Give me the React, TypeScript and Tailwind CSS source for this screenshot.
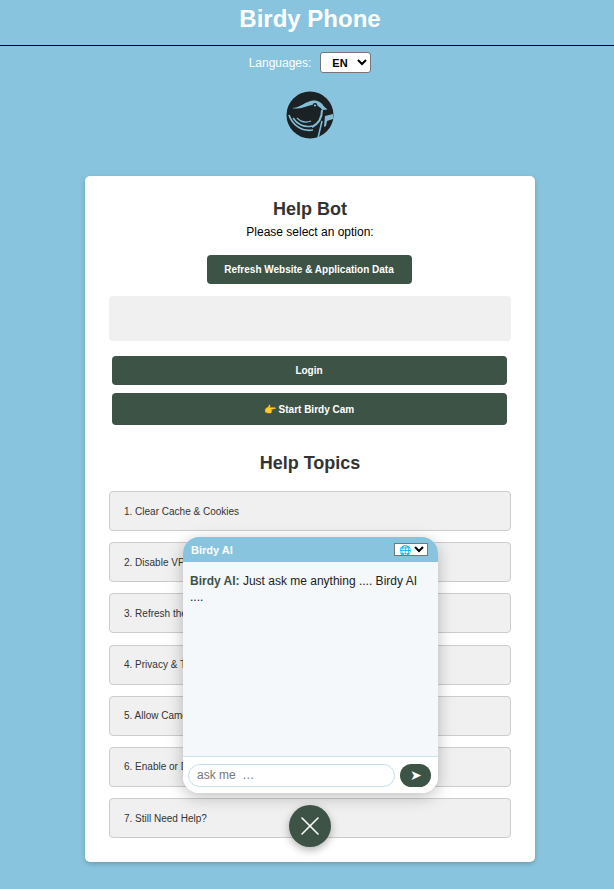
import { useState } from "react";
import { X } from "lucide-react";

const TOPICS = [
  "1. Clear Cache & Cookies",
  "2. Disable VPN or Proxy",
  "3. Refresh the Application",
  "4. Privacy & Tracking Settings",
  "5. Allow Camera & Microphone",
  "6. Enable or Disable Notifications",
  "7. Still Need Help?",
];

function BirdLogo() {
  return (
    <svg viewBox="0 0 48 48" className="h-12 w-12">
      <circle cx="24" cy="24" r="23.5" fill="#1a2225" />
      {/* head band */}
      <path
        d="M6 17C14 17 20 10 27 9.500c5 0 9 2 10.500 5.500l4 3.500-5 .5C33 15 30 13 26 14 19 15.500 13 19 6 17z"
        fill="#85bdd6"
      />
      <circle cx="29" cy="14.500" r="2.400" fill="#1a2225" />
      <circle cx="29" cy="14.500" r="1.100" fill="#8fc0d6" />
      {/* breast and wing arcs */}
      <path d="M36 19c0 8-4 14-10 17" stroke="#85bdd6" strokeWidth="2" fill="none" />
      <path d="M3 24c3 9 12 17 24 15" stroke="#85bdd6" strokeWidth="1.700" fill="none" />
      <path d="M7 27c4 6 11 10 19 8" stroke="#85bdd6" strokeWidth="1.500" fill="none" />
      <path d="M11 27c4 4 9 5 14 3" stroke="#85bdd6" strokeWidth="1.300" fill="none" />
      {/* tail */}
      <path d="M39 25l8-2v5l-6 2-1 5-2 1z" fill="#85bdd6" />
      <path d="M36 30l-4 17" stroke="#85bdd6" strokeWidth="1.500" />
    </svg>
  );
}

export default function App() {
  const [message, setMessage] = useState("");

  return (
    <div className="h-[889px] w-full overflow-hidden bg-[#89c4de]">
      <div
        className="relative h-[889px] w-[620px] text-[#333]"
        style={{ fontFamily: '"Liberation Sans", Arial, sans-serif' }}
      >
        <header className="flex h-[46px] items-start justify-center border-b border-black pt-[4px]">
          <h1 className="text-[24px] leading-[30px] font-bold text-white">Birdy Phone</h1>
        </header>

        <div className="mt-[6px] flex h-[21px] items-center justify-center gap-[9px] text-[12px] text-white">
          <span>Languages:</span>
          <select className="h-[21px] w-[51px] rounded-[3px] border border-[#767676] bg-white pl-[7px] text-[11px] font-bold text-black">
            <option>EN</option>
          </select>
        </div>

        <div className="mt-[18px] flex justify-center">
          <BirdLogo />
        </div>

        <main className="mx-auto mt-[37px] flex h-[686px] w-[450px] flex-col items-center rounded-[5px] bg-white px-6 pt-[22px] shadow-[0_2px_5px_rgba(0,0,0,0.2)]">
          <h2 className="text-[18px] leading-[22px] font-bold">Help Bot</h2>
          <p className="mt-[5px] text-[12px] leading-[14px] text-black">Please select an option:</p>
          <button className="mt-[16px] mr-[2px] h-[29px] w-[205px] rounded-[4px] bg-[#3d5346] text-[10px] font-bold text-white">
            Refresh Website &amp; Application Data
          </button>
          <div className="mt-[12px] h-[45px] w-full rounded-[4px] bg-[#f0f0f0]" />
          <button className="mt-[15px] mr-[2px] h-[29px] w-[395px] rounded-[4px] bg-[#3d5346] text-[10px] font-bold text-white">
            Login
          </button>
          <button className="mt-[8px] mr-[2px] h-[32px] w-[395px] rounded-[4px] bg-[#3d5346] text-[10px] font-bold text-white">
            👉 Start Birdy Cam
          </button>

          <h2 className="mt-[27px] text-[18px] leading-[22px] font-bold">Help Topics</h2>
          <ul className="mt-[17px] flex w-full flex-col gap-[11.2px]">
            {TOPICS.map((topic) => (
              <li
                key={topic}
                className="flex h-[40px] items-center rounded-[4px] border border-[#ccc] bg-[#f0f0f0] pl-[14px] text-[10px] text-[#333]"
              >
                {topic}
              </li>
            ))}
          </ul>
        </main>

        <section className="absolute top-[537px] left-[183px] flex h-[256px] w-[255px] flex-col overflow-hidden rounded-[16px] bg-white shadow-[0_4px_16px_rgba(0,0,0,0.25)]">
          <div className="flex h-[25px] shrink-0 items-center justify-between bg-[#89c4de] pr-[10px] pl-[8px]">
            <span className="pt-[1px] text-[11px] font-bold text-white">Birdy AI</span>
            <select className="h-[13px] w-[34px] border border-[#767676] bg-white text-[10px] text-black">
              <option>🌐</option>
            </select>
          </div>
          <div className="flex-1 border-b border-[#c9e3ee] bg-[#f4f8fb] px-[7px] pt-[11px] text-[12px] leading-[16px] text-[#222]">
            <strong className="text-[#3d5346]">Birdy AI:</strong> Just ask me anything .... Birdy AI ....
          </div>
          <div className="flex h-[36px] shrink-0 items-center gap-[5px] bg-white pr-[7px] pl-[5px]">
            <input
              value={message}
              onChange={(e) => setMessage(e.target.value)}
              placeholder="ask me  …"
              className="h-[23px] w-[207px] rounded-full border border-[#c3dde8] px-[8px] text-[12px] outline-none placeholder:text-[#777]"
            />
            <button className="flex h-[23px] w-[31px] items-center justify-center rounded-full bg-[#3d5346] text-[14px] leading-none text-white">
              ➤
            </button>
          </div>
        </section>

        <button className="absolute top-[805px] left-[289px] flex h-[42px] w-[42px] items-center justify-center rounded-full bg-[#3d5346] text-white shadow-[0_3px_8px_rgba(0,0,0,0.3)]">
          <X size={32} strokeWidth={1.2} />
        </button>
      </div>
    </div>
  );
}
